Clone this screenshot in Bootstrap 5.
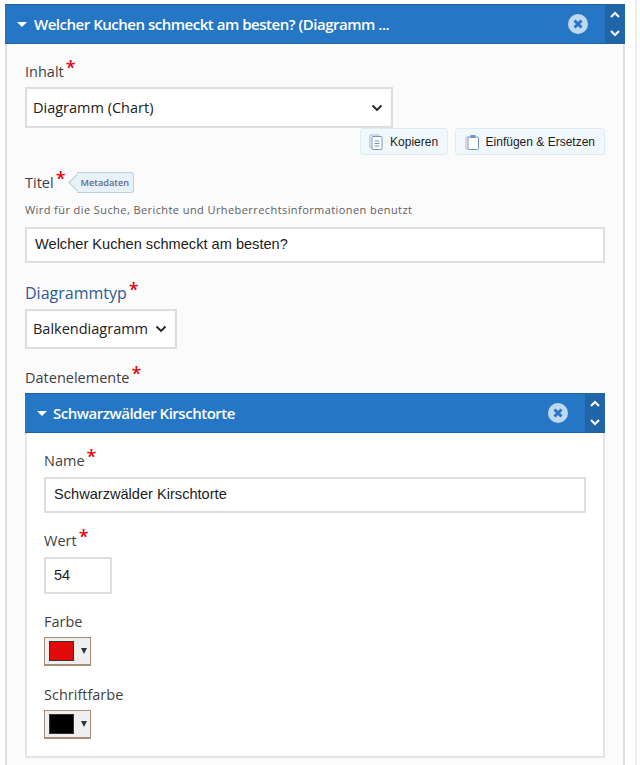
<!DOCTYPE html>
<html lang="de">
<head>
<meta charset="utf-8">
<title>Editor</title>
<link href="https://cdn.jsdelivr.net/npm/bootstrap@5.3.0/dist/css/bootstrap.min.css" rel="stylesheet">
<style>
html,body{height:765px;overflow:hidden}
body{background:#fff;font-family:"Open Sans",sans-serif;color:#3f3f3f;font-size:14px}
.page-wrap{display:flex;height:765px}
.rail{width:2px;margin-left:10px;background:#ececec}
.outer{margin:4px 0 0 5px;width:620px;height:761px;background:#fbfbfb;border-left:2px solid #dfdfdf;border-right:2px solid #dfdfdf}
.bar{background:#2577c5;color:#fff;height:40px;border-top:1px solid #1e639f;border-bottom:1px solid #1e639f}
.outer>.bar{margin:0 -2px}
.bar-title{font-size:15px;letter-spacing:-.48px;white-space:nowrap;font-weight:600}
.arrow{width:0;height:0;border-left:5.5px solid transparent;border-right:5.5px solid transparent;border-top:5px solid #fff;margin:0 7px 0 12px}
.inner .arrow{margin-right:6px}
.x-icon{width:20px;height:20px;margin-right:17px}
.sorter{width:20px;align-self:stretch;background:#1f65a8;padding:6px 0}
.sorter svg{width:12px;height:8px}
.panel{padding:18px 18px 0 18px}
.lab{font-size:14.5px;color:#3f3f3f;font-weight:500;line-height:20px;height:20px;margin:0}
.lab.blue{color:#2f5a8f;font-size:16px;font-weight:500}
.req{color:#e2050c;font-size:18px;line-height:0;margin-left:2px;vertical-align:3px;font-weight:600}
.sel{height:41px;border:2px solid #dedede;background:#fff;color:#212121;font-size:14.5px;padding:0 8px 0 6px;box-shadow:inset 0 0 3px rgba(0,0,0,.05)}
.sel svg{width:12px;height:8px}
.sel-a{width:368px;margin-top:5px}
.sel-b{width:152px;height:40px;margin-top:6px}
.tool{height:27px;background:#f1f8fc;border:1px solid #dcecf4;border-radius:3px;color:#1c1c1c;font-family:"Liberation Sans",sans-serif;font-size:12px;padding:0 9px}
.tool-a{padding:0 8.5px}
.tool-b{margin-left:7px}
.tool svg{width:14px;height:16px;margin-right:7px}
.tag{height:21px;background:#e8f1f8;border:1px solid #b9d0e2;border-left:0;border-radius:0 3px 3px 0;color:#5a6c8d;font-size:9.2px;font-weight:600;padding:0 4px 0 4px;position:relative;margin-left:11px}
.tag::before{content:"";position:absolute;left:-6px;top:3px;width:13px;height:13px;background:#e8f1f8;border-left:1px solid #b9d0e2;border-bottom:1px solid #b9d0e2;transform:rotate(45deg)}
.tag span{position:relative}
.hint{font-size:11px;color:#5e5e5e;letter-spacing:.42px;line-height:14px;margin:10px 0 10px;white-space:nowrap}
.txt{display:flex;align-items:center;height:36px;border:2px solid #dedede;background:#fff;font-family:"Liberation Sans",sans-serif;font-size:14.6px;color:#1c1c1c;padding:0 8px}
.inner{margin-top:5px;height:365px}
.inner .bar{margin:0}
.inner-box{height:325px;background:#fff;border:2px solid #e4e4e4;border-top:0;padding:18px 17px 0 17px}
.swatch{width:47px;height:29px;border:1px solid #a98c76;border-bottom-width:2px;background:#efefef;margin-top:5px;padding:0 0 0 4px}
.swatch i{display:block;width:25px;height:20px;border:1px solid #333}
.swatch b{display:block;width:0;height:0;border-left:3.5px solid transparent;border-right:3.5px solid transparent;border-top:6px solid #333;margin-left:7px}
.c-red{background:#e20b0b}
.c-black{background:#000}
.gap-18{margin-top:18px}
.gap-19{margin-top:19px}
.gap-20{margin-top:20px}
.titel-row{margin-top:17px}
.txt-low{margin-top:6px}
.w-wert{width:68px;height:37px}
</style>
</head>
<body>
<div class="page-wrap">
<div class="outer">
  <div class="bar d-flex align-items-center">
    <span class="arrow"></span>
    <span class="bar-title flex-grow-1">Welcher Kuchen schmeckt am besten? (Diagramm ...</span>
    <svg class="x-icon" viewBox="0 0 20 20"><circle cx="10" cy="10" r="10" fill="#bfd8ef"/><path d="M6.5 6.5l7 7M13.5 6.5l-7 7" stroke="#2577c5" stroke-width="3"/></svg>
    <div class="sorter d-flex flex-column align-items-center justify-content-between">
      <svg viewBox="0 0 12 8"><path d="M2 6l4-4 4 4" fill="none" stroke="#fff" stroke-width="2"/></svg>
      <svg viewBox="0 0 12 8"><path d="M2 2l4 4 4-4" fill="none" stroke="#fff" stroke-width="2"/></svg>
    </div>
  </div>
  <div class="panel">
    <p class="lab">Inhalt<span class="req">*</span></p>
    <div class="sel sel-a d-flex align-items-center justify-content-between">Diagramm (Chart)
      <svg viewBox="0 0 12 8"><path d="M1.5 1.5L6 6l4.5-4.5" fill="none" stroke="#222" stroke-width="1.8"/></svg>
    </div>
    <div class="d-flex justify-content-end">
      <div class="tool tool-a d-flex align-items-center">
        <svg viewBox="0 0 14 16"><rect x="1" y="1" width="9" height="13" rx="1" fill="#fff" stroke="#9fb0d8"/><rect x="3" y="2.5" width="10" height="13" rx="1" fill="#fff" stroke="#6f94c4"/><path d="M5.5 7h5M5.5 9.5h5M5.5 12h5" stroke="#6f94c4"/></svg>Kopieren
      </div>
      <div class="tool tool-b d-flex align-items-center">
        <svg viewBox="0 0 14 16"><rect x="1" y="3" width="9" height="12" rx="1" fill="#fff" stroke="#c9a8b8"/><rect x="3" y="3" width="10.5" height="12.5" rx="1" fill="#fff" stroke="#6f94c4"/><rect x="5.5" y="1" width="5" height="3" fill="#6f94c4"/></svg>Einfügen &amp; Ersetzen
      </div>
    </div>
    <div class="d-flex align-items-center titel-row">
      <p class="lab">Titel<span class="req">*</span></p>
      <div class="tag d-flex align-items-center"><span>Metadaten</span></div>
    </div>
    <p class="hint">Wird für die Suche, Berichte und Urheberrechtsinformationen benutzt</p>
    <div class="txt">Welcher Kuchen schmeckt am besten?</div>
    <p class="lab blue gap-20">Diagrammtyp<span class="req">*</span></p>
    <div class="sel sel-b d-flex align-items-center justify-content-between">Balkendiagramm
      <svg viewBox="0 0 12 8"><path d="M1.5 1.5L6 6l4.5-4.5" fill="none" stroke="#222" stroke-width="1.8"/></svg>
    </div>
    <p class="lab gap-19">Datenelemente<span class="req">*</span></p>
    <div class="inner">
      <div class="bar d-flex align-items-center">
        <span class="arrow"></span>
        <span class="bar-title flex-grow-1">Schwarzwälder Kirschtorte</span>
        <svg class="x-icon" viewBox="0 0 20 20"><circle cx="10" cy="10" r="10" fill="#bfd8ef"/><path d="M6.5 6.5l7 7M13.5 6.5l-7 7" stroke="#2577c5" stroke-width="3"/></svg>
        <div class="sorter d-flex flex-column align-items-center justify-content-between">
          <svg viewBox="0 0 12 8"><path d="M2 6l4-4 4 4" fill="none" stroke="#fff" stroke-width="2"/></svg>
          <svg viewBox="0 0 12 8"><path d="M2 2l4 4 4-4" fill="none" stroke="#fff" stroke-width="2"/></svg>
        </div>
      </div>
      <div class="inner-box">
        <p class="lab">Name<span class="req">*</span></p>
        <div class="txt txt-low">Schwarzwälder Kirschtorte</div>
        <p class="lab gap-18">Wert<span class="req">*</span></p>
        <div class="txt txt-low w-wert">54</div>
        <p class="lab gap-18">Farbe</p>
        <div class="swatch d-flex align-items-center"><i class="c-red"></i><b></b></div>
        <p class="lab gap-19">Schriftfarbe</p>
        <div class="swatch d-flex align-items-center"><i class="c-black"></i><b></b></div>
      </div>
    </div>
  </div>
</div>
<div class="rail"></div>
</div>
<script src="https://cdn.jsdelivr.net/npm/bootstrap@5.3.0/dist/js/bootstrap.bundle.min.js"></script>
</body>
</html>
